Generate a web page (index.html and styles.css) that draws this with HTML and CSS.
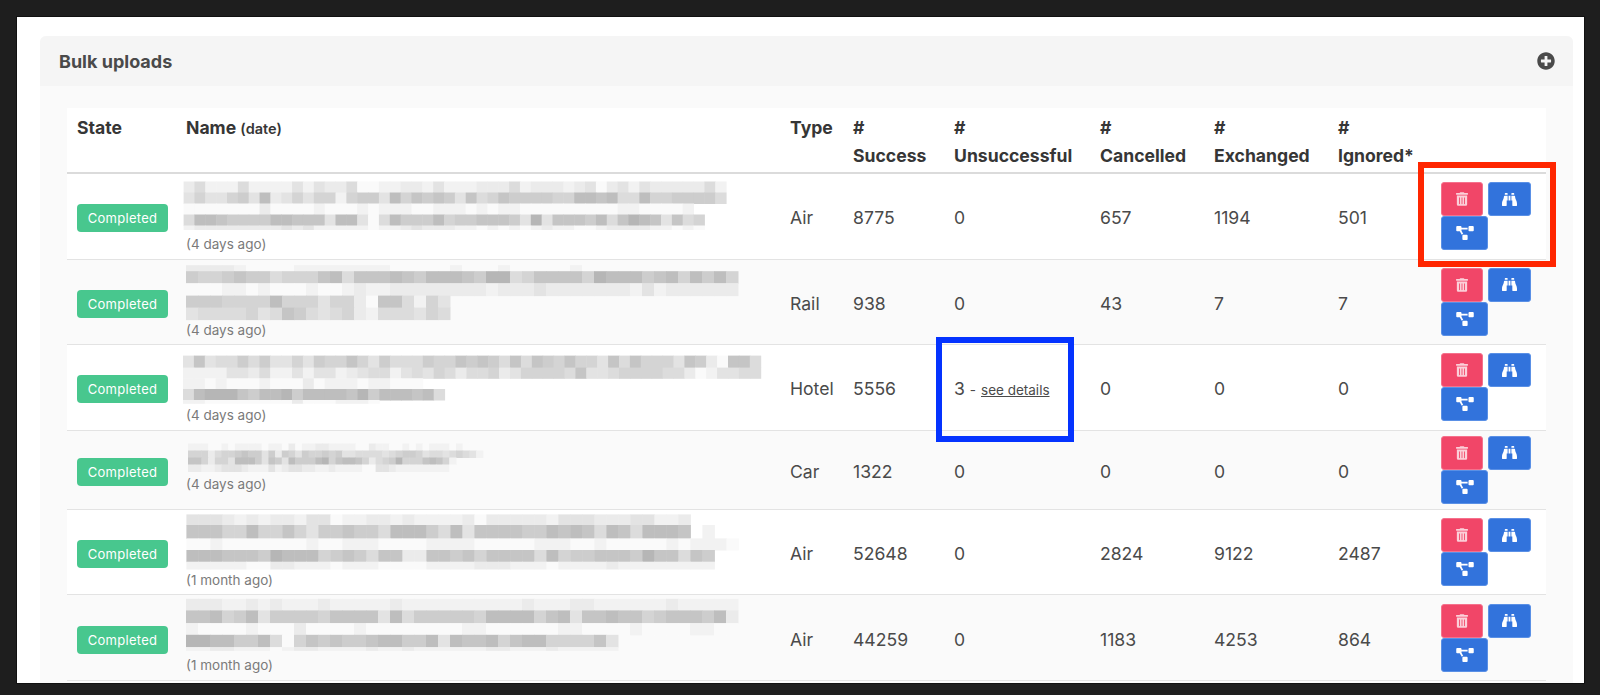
FILE: index.html
```html
<!DOCTYPE html>
<html lang="en">
<head>
<meta charset="utf-8">
<title>Bulk uploads</title>
<link rel="stylesheet" href="styles.css">
</head>
<body>
<svg class="icon-defs" aria-hidden="true">
  <symbol id="i-trash" viewBox="0 0 448 512"><path d="M32 464a48 48 0 0 0 48 48h288a48 48 0 0 0 48-48V128H32zm272-256a16 16 0 0 1 32 0v224a16 16 0 0 1-32 0zm-96 0a16 16 0 0 1 32 0v224a16 16 0 0 1-32 0zm-96 0a16 16 0 0 1 32 0v224a16 16 0 0 1-32 0zM432 32H312l-9.4-18.7A24 24 0 0 0 281.1 0H166.8a23.72 23.72 0 0 0-21.4 13.3L136 32H16A16 16 0 0 0 0 48v32a16 16 0 0 0 16 16h416a16 16 0 0 0 16-16V48a16 16 0 0 0-16-16z"/></symbol>
  <symbol id="i-bino" viewBox="0 0 512 512"><path d="M416 48c0-8.84-7.16-16-16-16h-64c-8.84 0-16 7.16-16 16v48h96V48zM63.91 159.99C61.4 253.84 3.46 274.22 0 404v44c0 17.67 14.33 32 32 32h96c17.67 0 32-14.33 32-32V288h32V128H95.84c-17.63 0-31.45 14.37-31.93 31.99zm384.18 0c-.48-17.62-14.3-31.99-31.93-31.99H320v160h32v160c0 17.67 14.33 32 32 32h96c17.67 0 32-14.33 32-32v-44c-3.46-129.78-61.4-150.16-63.91-244.01zM176 32h-64c-8.84 0-16 7.16-16 16v48h96V48c0-8.84-7.16-16-16-16zm48 256h64V128h-64v160z"/></symbol>
  <symbol id="i-tree" viewBox="0 0 640 512"><path d="M384 320H256c-17.67 0-32 14.33-32 32v128c0 17.67 14.33 32 32 32h128c17.67 0 32-14.33 32-32V352c0-17.67-14.33-32-32-32zM192 32c0-17.67-14.33-32-32-32H32C14.33 0 0 14.33 0 32v128c0 17.67 14.33 32 32 32h95.72l73.16 128.04C211.98 300.98 232.4 288 256 288h.28L192 175.51V128h224V64H192V32zM608 0H480c-17.67 0-32 14.33-32 32v128c0 17.67 14.33 32 32 32h128c17.67 0 32-14.33 32-32V32c0-17.67-14.33-32-32-32z"/></symbol>
</svg>
<div class="frame">
  <section class="panel">
    <header class="panel-head">
      <h2 class="panel-title">Bulk uploads</h2>
      <svg class="plus" viewBox="0 0 512 512"><path d="M256 8C119 8 8 119 8 256s111 248 248 248 248-111 248-248S393 8 256 8zm144 276c0 6.6-5.4 12-12 12h-92v92c0 6.6-5.4 12-12 12h-56c-6.6 0-12-5.4-12-12v-92h-92c-6.6 0-12-5.4-12-12v-56c0-6.6 5.4-12 12-12h92v-92c0-6.6 5.4-12 12-12h56c6.6 0 12 5.4 12 12v92h92c6.6 0 12 5.4 12 12v56z"/></svg>
    </header>
    <div class="panel-body">
      <table class="uploads">
        <colgroup>
          <col class="c-state"><col class="c-name"><col class="c-type"><col class="c-success"><col class="c-unsucc"><col class="c-canc"><col class="c-exch"><col class="c-ign"><col class="c-act">
        </colgroup>
        <thead>
          <tr>
            <th>State</th><th>Name <small class="th-small">(date)</small></th><th>Type</th><th>#<br>Success</th><th>#<br>Unsuccessful</th><th>#<br>Cancelled</th><th>#<br>Exchanged</th><th>#<br>Ignored*</th><th></th>
          </tr>
        </thead>
        <tbody>
          <tr>
            <td><span class="badge">Completed</span></td>
            <td class="name"><svg class="blur tall" data-x="-2.4" data-w="10.85" data-lines="2.5|11:75888588886867759988778688877758777876976867777758|11:64664361764644843361423236254233334411215514433335|11:99999997999989998988899888989889999999998899998|11:511233331122261169513331433222360622231520126254|4:877777777676888889887677788989898788998777788989"></svg><span class="date">(4 days ago)</span></td>
            <td>Air</td><td>8775</td><td>0</td><td>657</td><td>1194</td><td>501</td>
            <td class="actions"><div class="btns"><button class="btn red"><svg class="i-t"><use href="#i-trash"/></svg></button><button class="btn blue"><svg class="i-b"><use href="#i-bino"/></svg></button><button class="btn blue wide"><svg class="i-d"><use href="#i-tree"/></svg></button></div></td>
          </tr>
          <tr>
            <td><span class="badge">Completed</span></td>
            <td class="name"><svg class="blur tall" data-x="0" data-w="12" data-lines="1.2|6:7777899998888888899999899989999989999|12:3443233544421522212311123005422224011132141314|12.4:9998898999899878877777777877767777777868777777|12:3334444144464479225846|12:6555546523565478555645"></svg><span class="date">(4 days ago)</span></td>
            <td>Rail</td><td>938</td><td>0</td><td>43</td><td>7</td><td>7</td>
            <td class="actions"><div class="btns"><button class="btn red"><svg class="i-t"><use href="#i-trash"/></svg></button><button class="btn blue"><svg class="i-b"><use href="#i-bino"/></svg></button><button class="btn blue wide"><svg class="i-d"><use href="#i-tree"/></svg></button></div></td>
          </tr>
          <tr>
            <td><span class="badge">Completed</span></td>
            <td class="name"><svg class="blur tall" data-x="-3" data-w="10.9" data-lines="5.6|12:62655353664634424635553442323525234244625244462379225|10.7:88886675886866876558656457554764444526654444557986655|10.7:8898999899979888988999|11:510002311031111203111215|3.3:889999999979998889"></svg><span class="date">(4 days ago)</span></td>
            <td>Hotel</td><td>5556</td><td class="unsucc">3 <small class="dash">-</small> <a class="details" href="#">see details</a></td><td>0</td><td>0</td><td>0</td>
            <td class="actions"><div class="btns"><button class="btn red"><svg class="i-t"><use href="#i-trash"/></svg></button><button class="btn blue"><svg class="i-b"><use href="#i-bino"/></svg></button><button class="btn blue wide"><svg class="i-d"><use href="#i-tree"/></svg></button></div></td>
          </tr>
          <tr>
            <td><span class="badge">Completed</span></td>
            <td class="name"><svg class="blur short" data-x="2" data-w="6.7" data-lines="-1.5|7:88899898888988979887788889978899898988898999|7:44475443233637346344343665555654334655654568|7:2247446111362361333104211247543044421248|7:7788766678886876677887888899667888888889"></svg><span class="date">(4 days ago)</span></td>
            <td>Car</td><td>1322</td><td>0</td><td>0</td><td>0</td><td>0</td>
            <td class="actions"><div class="btns"><button class="btn red"><svg class="i-t"><use href="#i-trash"/></svg></button><button class="btn blue"><svg class="i-b"><use href="#i-bino"/></svg></button><button class="btn blue wide"><svg class="i-d"><use href="#i-tree"/></svg></button></div></td>
          </tr>
          <tr>
            <td><span class="badge">Completed</span></td>
            <td class="name"><svg class="blur tall" data-x="0.4" data-w="12" data-lines="0.4|10.6:666787877866988778788887977777866677766887|13.4:222441442463323351113516222233121251251112 8|11.6:9989999999899888999988889999988899899999898889|11.7:11122230111432352277223242222514332223022523|7.3:88888997788898889999888877788898888788888888"></svg><span class="date">(1 month ago)</span></td>
            <td>Air</td><td>52648</td><td>0</td><td>2824</td><td>9122</td><td>2487</td>
            <td class="actions"><div class="btns"><button class="btn red"><svg class="i-t"><use href="#i-trash"/></svg></button><button class="btn blue"><svg class="i-b"><use href="#i-bino"/></svg></button><button class="btn blue wide"><svg class="i-d"><use href="#i-tree"/></svg></button></div></td>
          </tr>
          <tr>
            <td><span class="badge">Completed</span></td>
            <td class="name"><svg class="blur tall" data-x="0" data-w="12" data-lines="-1.2|11.6:7778878788878888878888888888788877888888788888|12.7:2214316333342222615333334111142162212243222317|11.7:8999989997999989999999988999999889999899998899|12.3:001133159423233211331612214211444426|3.3:887788898778888788788888877888788888"></svg><span class="date">(1 month ago)</span></td>
            <td>Air</td><td>44259</td><td>0</td><td>1183</td><td>4253</td><td>864</td>
            <td class="actions"><div class="btns"><button class="btn red"><svg class="i-t"><use href="#i-trash"/></svg></button><button class="btn blue"><svg class="i-b"><use href="#i-bino"/></svg></button><button class="btn blue wide"><svg class="i-d"><use href="#i-tree"/></svg></button></div></td>
          </tr>
        </tbody>
      </table>
    </div>
  </section>
  <div class="mark mark-red"></div>
  <div class="mark mark-blue"></div>
</div>
<script src="app.js"></script>
</body>
</html>
```
FILE: styles.css
```css
* { box-sizing: border-box; }
html, body { height: 100%; margin: 0; }
body {
  background: #1e1e1e;
  padding: 17px 16px 12px 17px;
  overflow: hidden;
  font-family: Inter, "Liberation Sans", sans-serif;
  font-size: 17.6px;
  color: #4a4a4a;
}
.icon-defs { display: none; }
.frame {
  position: relative;
  height: 100%;
  background: #fff;
  padding: 19px 11px 0 23px;
  overflow: hidden;
  box-shadow: 0 0 0 1px #111;
}
.panel { height: 100%; display: flex; flex-direction: column; background: #fafafa; border-radius: 6px 6px 0 0; }
.panel-head {
  flex: none;
  height: 50px;
  display: flex;
  align-items: center;
  justify-content: space-between;
  padding: 0 18px 0 19px;
  background: #f5f5f5;
  border-radius: 6px 6px 0 0;
}
.panel-title { margin: 0; font-size: 18px; font-weight: 700; color: #4a4a4a; }
.plus { width: 18px; height: 18px; fill: #4a4a4a; }
.panel-body { flex: 1; padding: 22px 27px 0 27px; }
.uploads { width: 1479px; table-layout: fixed; border-collapse: separate; border-spacing: 0; background: #fff; }
.c-state { width: 109px; }
.c-name { width: 604px; }
.c-type { width: 63px; }
.c-success { width: 101px; }
.c-unsucc { width: 146px; }
.c-canc { width: 114px; }
.c-exch { width: 124px; }
.c-ign { width: 104px; }
.c-act { width: 114px; }
.uploads th {
  height: 66px;
  padding: 6px 10px 0;
  vertical-align: top;
  text-align: left;
  font-size: 17.6px;
  font-weight: 700;
  line-height: 28px;
  color: #363636;
  border-bottom: 2px solid #dbdbdb;
  white-space: nowrap;
}
.th-small { font-size: 14.5px; font-weight: 600; }
.uploads td {
  padding: 7px 10px 3px;
  vertical-align: middle;
  line-height: 24px;
  border-bottom: 1px solid #e3e3e3;
}
.uploads td.name { padding: 4.5px 10px 3.5px; }
.uploads tbody tr:nth-child(even) { background: #fafafa; }
.badge {
  display: flex;
  align-items: center;
  justify-content: center;
  width: 91px;
  height: 28px;
  background: #48c78e;
  color: #fff;
  font-size: 13px;
  letter-spacing: .3px;
  border-radius: 4px;
}
.blur { display: block; width: 590px; overflow: visible; filter: blur(.7px); }
.blur.tall { height: 54.6px; }
.blur.short { height: 28px; }
.date { display: block; font-size: 13.5px; line-height: 22px; color: #7a7a7a; }
.dash { font-size: 13.5px; }
.details { font-size: 13.5px; color: #4a4a4a; text-decoration: underline; }
.uploads td.actions { padding: 5px 0 5px 9px; }
.btns { display: flex; flex-wrap: wrap; width: 100px; column-gap: 5px; }
.btn {
  display: flex;
  align-items: center;
  justify-content: center;
  height: 34px;
  width: 42px;
  padding: 0;
  border: 1px solid transparent;
  border-radius: 3px;
}
.btn.blue { width: 43px; background: #3273dc; border-color: #5a90e6; }
.btn.red { background: #f14668; border-color: #f5718c; }
.btn.wide { width: 47px; }
.i-t { width: 12px; height: 14px; fill: #fbd0d9; }
.i-b { width: 15px; height: 15px; fill: #fff; }
.i-d { width: 18px; height: 14px; fill: #fff; }
.mark { position: absolute; border-style: solid; border-width: 6px; width: 138px; height: 105px; }
.mark-red { left: 1401px; top: 145px; border-color: #ff2600; }
.mark-blue { left: 919px; top: 320px; border-color: #0433ff; }
```
FILE: app.js
```js
// Draws the pixelated (redacted) name cells from their grey-level data.
document.querySelectorAll('svg.blur').forEach(function (svg) {
  var x0 = parseFloat(svg.dataset.x);
  var w = parseFloat(svg.dataset.w);
  var parts = svg.dataset.lines.split('|');
  var y = parseFloat(parts[0]);
  parts.slice(1).forEach(function (line) {
    var p = line.split(':');
    var h = parseFloat(p[0]);
    Array.prototype.forEach.call(p[1], function (ch, i) {
      if (ch === ' ') return;
      var g = Math.round(182 + parseInt(ch, 10) * 7.5);
      var r = document.createElementNS('http://www.w3.org/2000/svg', 'rect');
      r.setAttribute('x', x0 + i * w);
      r.setAttribute('y', y);
      r.setAttribute('width', w + 0.5);
      r.setAttribute('height', h + 0.5);
      r.setAttribute('fill', 'rgb(' + g + ',' + g + ',' + g + ')');
      svg.appendChild(r);
    });
    y += h;
  });
});
```
